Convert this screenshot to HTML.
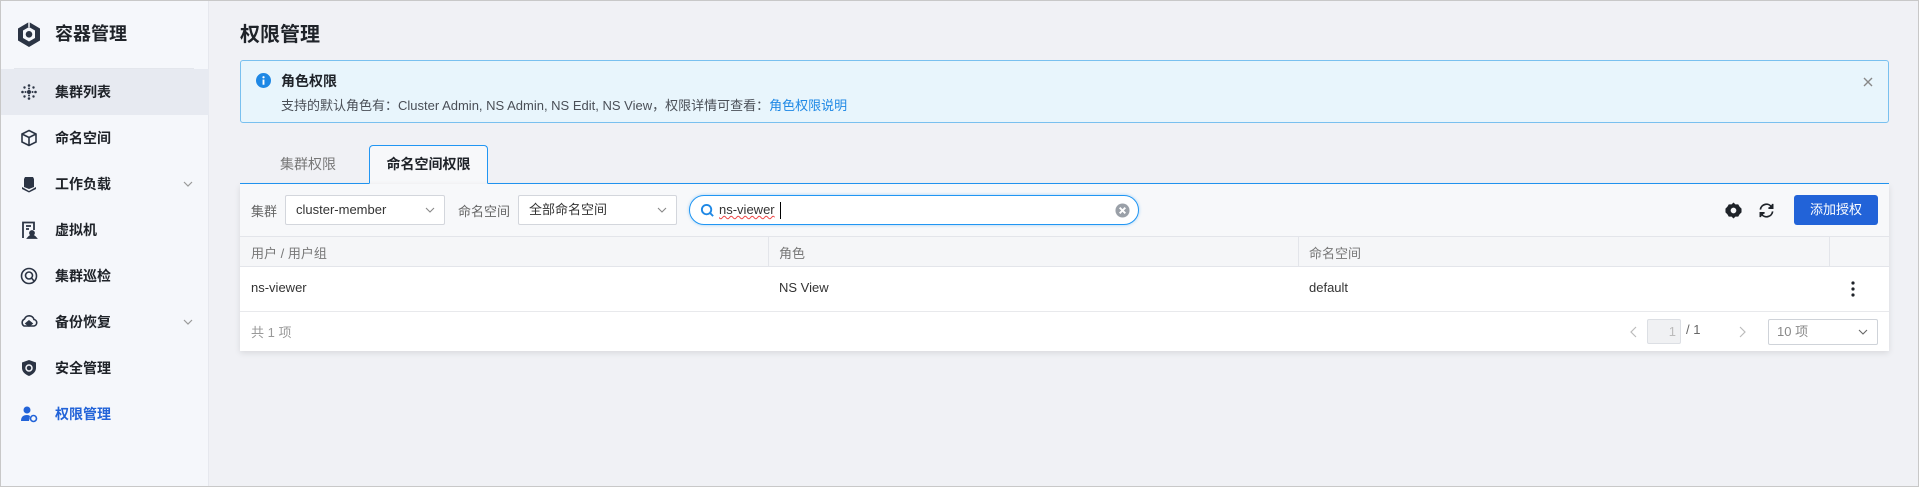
<!DOCTYPE html>
<html><head><meta charset="utf-8"><style>
*{box-sizing:border-box;margin:0;padding:0}
body{width:1919px;height:487px;overflow:hidden;background:#f0f1f5;font-family:"Liberation Sans","Noto Sans CJK SC",sans-serif;position:relative;color:#1f2329}
.frame{position:absolute;left:0;top:0;width:1919px;height:487px;border:1px solid #c8c8c8;pointer-events:none;z-index:10}
.side{position:absolute;left:0;top:0;width:209px;height:487px;background:#f5f7fb;border-right:1px solid #e6e8ee}
.logo{position:absolute;left:17px;top:21px}
.brand{position:absolute;left:55px;top:20px;font-size:18px;font-weight:bold;color:#1f2329}
.sdiv{position:absolute;left:14px;top:68px;width:180px;height:1px;background:#e3e6ec}
.item{position:absolute;left:0;width:209px;height:46px;display:flex;align-items:center;font-size:14px;font-weight:bold;color:#1f2329}
.item.act{background:#e7eaf1}
.item .ic{position:absolute;left:20px;top:14px;width:18px;height:18px}
.item .t{position:absolute;left:55px}
.item .ch{position:absolute;left:183px;top:20px}
.item.blue{color:#2263d8}
h1{position:absolute;left:240px;top:18px;font-size:20px;font-weight:bold;color:#1f2329}
.alert{position:absolute;left:240px;top:60px;width:1649px;height:63px;background:#e8f5fc;border:1px solid #79c0ef;border-radius:3px}
.alert .ti{position:absolute;left:40px;top:10px;font-size:14px;font-weight:bold}
.alert .ds{position:absolute;left:40px;top:34px;font-size:13px;color:#4a4f57}
.alert .ds a{color:#1e88e5;text-decoration:none}
.tabs{position:absolute;left:240px;top:145px;width:1649px;height:39px;border-bottom:1px solid #2196f3}
.tab1{position:absolute;left:40px;top:9px;font-size:14px;color:#777}
.tab2{position:absolute;left:129px;top:0;width:119px;height:39px;border:1px solid #2196f3;border-bottom:1px solid #f7f8fa;border-radius:4px 4px 0 0;background:#f7f8fa;font-size:14px;font-weight:bold;text-align:center;line-height:36px}
.card{position:absolute;left:240px;top:184px;width:1649px;height:167px;background:#fff;box-shadow:0 2px 6px rgba(0,0,0,.1)}
.tb{position:absolute;left:0;top:0;width:100%;height:53px;background:#f7f8fa;border-bottom:1px solid #e3e5ea}
.lbl{position:absolute;top:17px;font-size:13px;color:#666}
.sel{position:absolute;top:11px;height:30px;border:1px solid #d3d6dc;border-radius:2px;background:#fff;font-size:13px;padding-left:10px;line-height:28px;color:#333}
.sel svg{position:absolute;right:9px;top:11px}
.search{position:absolute;left:449px;top:11px;width:450px;height:30px;border:1px solid #2196f3;border-radius:15px;background:#fff;box-shadow:0 0 3px rgba(33,150,243,.4)}
.btn{position:absolute;left:1554px;top:11px;width:84px;height:30px;background:#2263d8;border-radius:3px;color:#fff;font-size:13px;text-align:center;line-height:30px}
.th{position:absolute;top:53px;left:0;width:100%;height:30px;background:#f5f6f8;border-bottom:1px solid #e3e5ea;font-size:13px;color:#777}
.th div,.tr div{position:absolute;top:6px}
.vl{position:absolute;top:0;width:1px;height:30px;background:#e3e5ea}
.tr{position:absolute;top:83px;left:0;width:100%;height:45px;border-bottom:1px solid #e8e9ec;font-size:13px;color:#333}
.tr div{top:13px}
.ft{position:absolute;top:128px;left:0;width:100%;height:39px;font-size:13px;color:#999}
</style></head><body>
<div class="side">
<svg class="logo" width="24" height="27" viewBox="0 0 24 27"><path d="M12 1 L23 7.5 V19.5 L12 26 L1 19.5 V7.5 Z" fill="#2b3444"/><path d="M12 6 L18 9.5 V17 L12 20.5 L6 17 V9.5 Z" fill="#f5f7fb"/><circle cx="12" cy="13.3" r="3.3" fill="#2b3444"/><path d="M12 1 V6" stroke="#f5f7fb" stroke-width="1.5"/></svg>
<div class="brand">容器管理</div>
<div class="sdiv"></div>
<div class="item act" style="top:69px"><svg class="ic" viewBox="0 0 18 18" fill="#2b3444"><circle cx="9" cy="9" r="2"/><circle cx="9" cy="2.5" r="1.3"/><circle cx="9" cy="15.5" r="1.3"/><circle cx="2.5" cy="9" r="1.3"/><circle cx="15.5" cy="9" r="1.3"/><circle cx="4.5" cy="4.5" r="1.2"/><circle cx="13.5" cy="4.5" r="1.2"/><circle cx="4.5" cy="13.5" r="1.2"/><circle cx="13.5" cy="13.5" r="1.2"/><circle cx="9" cy="5.5" r="1"/><circle cx="9" cy="12.5" r="1"/><circle cx="5.5" cy="9" r="1"/><circle cx="12.5" cy="9" r="1"/></svg><span class="t">集群列表</span></div>
<div class="item" style="top:115px"><svg class="ic" viewBox="0 0 18 18" fill="none" stroke="#2b3444" stroke-width="1.6"><path d="M9 1.5 L16 5 V13 L9 16.5 L2 13 V5 Z M2 5 L9 8.5 L16 5 M9 8.5 V16.5"/></svg><span class="t">命名空间</span></div>
<div class="item" style="top:161px"><svg class="ic" viewBox="0 0 18 18" fill="#2b3444"><path d="M5 2 H13 L14 4 V12 L9 14 L4 12 V4 Z"/><path d="M2 12 L9 16 L16 12 V14 L9 17.5 L2 14 Z"/></svg><span class="t">工作负载</span><svg class="ch" width="10" height="6"><path d="M1 1 L5 5 L9 1" fill="none" stroke="#999" stroke-width="1.2"/></svg></div>
<div class="item" style="top:207px"><svg class="ic" viewBox="0 0 18 18" fill="none" stroke="#2b3444" stroke-width="1.8"><path d="M3 17 V1.5 H14 V9 M6 5 H11 M6 8 H9"/><circle cx="12" cy="12" r="2" fill="#2b3444"/><path d="M8 17 Q12 12 16 17 Z" fill="#2b3444"/></svg><span class="t">虚拟机</span></div>
<div class="item" style="top:253px"><svg class="ic" viewBox="0 0 18 18" fill="none" stroke="#2b3444" stroke-width="1.6"><circle cx="9" cy="9" r="7.5"/><circle cx="9" cy="8.5" r="3.5"/><path d="M11.5 11 L14 14"/></svg><span class="t">集群巡检</span></div>
<div class="item" style="top:299px"><svg class="ic" viewBox="0 0 18 18" fill="none" stroke="#2b3444" stroke-width="1.6"><path d="M4 13 A4 4 0 0 1 4.5 6 A5 5 0 0 1 14 6.5 A3.3 3.3 0 0 1 14 13 Z"/><path d="M9 8 L6 10.5 L9 13 L12 10.5 Z" fill="#2b3444"/></svg><span class="t">备份恢复</span><svg class="ch" width="10" height="6"><path d="M1 1 L5 5 L9 1" fill="none" stroke="#999" stroke-width="1.2"/></svg></div>
<div class="item" style="top:345px"><svg class="ic" viewBox="0 0 18 18"><path d="M9 1 L16 3.5 V9 Q16 14 9 17 Q2 14 2 9 V3.5 Z" fill="#2b3444"/><circle cx="9" cy="9" r="3" fill="none" stroke="#f5f7fb" stroke-width="1.5"/></svg><span class="t">安全管理</span></div>
<div class="item blue" style="top:391px"><svg class="ic" viewBox="0 0 18 18" fill="#2263d8"><circle cx="7" cy="5" r="3.5"/><path d="M1 16 Q1 10 7 10 Q9 10 10 11 L9 16 Z"/><circle cx="13.5" cy="13.5" r="3" fill="none" stroke="#2263d8" stroke-width="1.6"/></svg><span class="t">权限管理</span></div>
</div>

<h1>权限管理</h1>
<div class="alert">
<svg style="position:absolute;left:15px;top:12px" width="15" height="15" viewBox="0 0 16 16"><circle cx="8" cy="8" r="8" fill="#1e88e5"/><rect x="7" y="7" width="2" height="5.5" fill="#fff"/><circle cx="8" cy="4.5" r="1.2" fill="#fff"/></svg>
<div class="ti">角色权限</div>
<div class="ds">支持的默认角色有：Cluster Admin, NS Admin, NS Edit, NS View，权限详情可查看：<a>角色权限说明</a></div>
<svg style="position:absolute;left:1622px;top:16px" width="10" height="10"><path d="M1 1 L9 9 M9 1 L1 9" stroke="#888" stroke-width="1.4"/></svg>
</div>
<div class="tabs"><div class="tab1">集群权限</div><div class="tab2">命名空间权限</div></div>
<div class="card">
<div class="tb">
<div class="lbl" style="left:11px">集群</div>
<div class="sel" style="left:45px;width:160px">cluster-member<svg width="10" height="6"><path d="M1 1 L5 5 L9 1" fill="none" stroke="#888" stroke-width="1.1"/></svg></div>
<div class="lbl" style="left:218px">命名空间</div>
<div class="sel" style="left:278px;width:159px">全部命名空间<svg width="10" height="6"><path d="M1 1 L5 5 L9 1" fill="none" stroke="#888" stroke-width="1.1"/></svg></div>
<div class="search"><svg style="position:absolute;left:10px;top:7px" width="15" height="15" viewBox="0 0 16 16" fill="none" stroke="#1e88e5" stroke-width="2"><circle cx="7" cy="7" r="5"/><path d="M10.5 10.5 L14 14"/></svg><span style="position:absolute;left:29px;top:6px;font-size:13px;color:#333;text-decoration:underline wavy #e44;text-decoration-thickness:1px">ns-viewer</span><span style="position:absolute;left:90px;top:6px;width:1px;height:17px;background:#000"></span><svg style="position:absolute;left:425px;top:7px" width="15" height="15" viewBox="0 0 16 16"><circle cx="8" cy="8" r="7.5" fill="#9aa0a8"/><path d="M5 5 L11 11 M11 5 L5 11" stroke="#fff" stroke-width="2"/></svg></div>
<svg style="position:absolute;left:1485px;top:18px" width="17" height="17" viewBox="0 0 18 18"><path d="M9 0.5 L11 2.5 H14 L15.5 5 L17.5 7 V11 L15.5 13 L14 15.5 H11 L9 17.5 L7 15.5 H4 L2.5 13 L0.5 11 V7 L2.5 5 L4 2.5 H7 Z" fill="#1f2329"/><circle cx="9" cy="9" r="3" fill="#f7f8fa"/></svg>
<svg style="position:absolute;left:1518px;top:18px" width="17" height="17" viewBox="0 0 18 18" fill="none" stroke="#1f2329" stroke-width="1.8"><path d="M2.5 8 A6.5 6.5 0 0 1 14.5 5.5 M15.5 10 A6.5 6.5 0 0 1 3.5 12.5"/><path d="M15.5 2 V6.5 H11" fill="#1f2329"/><path d="M2.5 16 V11.5 H7" fill="#1f2329"/></svg>
<div class="btn">添加授权</div>
</div>
<div class="th"><div style="left:11px">用户 / 用户组</div><span class="vl" style="left:528px"></span><div style="left:539px">角色</div><span class="vl" style="left:1058px"></span><div style="left:1069px">命名空间</div><span class="vl" style="left:1589px"></span></div>
<div class="tr"><div style="left:11px">ns-viewer</div><div style="left:539px">NS View</div><div style="left:1069px">default</div>
<svg style="position:absolute;left:1611px;top:14px" width="4" height="16"><circle cx="2" cy="2" r="1.6" fill="#1f2329"/><circle cx="2" cy="8" r="1.6" fill="#1f2329"/><circle cx="2" cy="14" r="1.6" fill="#1f2329"/></svg></div>
<div class="ft"><span style="position:absolute;left:11px;top:10px">共 1 项</span>
<svg style="position:absolute;left:1390px;top:14px" width="7" height="12"><path d="M6 1 L1 6 L6 11" fill="none" stroke="#bbb" stroke-width="1.2"/></svg>
<div style="position:absolute;left:1407px;top:7px;width:34px;height:25px;background:#f0f1f3;border:1px solid #dcdfe4;border-radius:2px;text-align:right;padding-right:4px;line-height:23px;color:#bbb">1</div>
<span style="position:absolute;left:1446px;top:10px;color:#666">/ 1</span>
<svg style="position:absolute;left:1499px;top:14px" width="7" height="12"><path d="M1 1 L6 6 L1 11" fill="none" stroke="#bbb" stroke-width="1.2"/></svg>
<div style="position:absolute;left:1528px;top:7px;width:110px;height:26px;border:1px solid #cfd3d9;border-radius:2px;padding-left:8px;line-height:24px;color:#888">10 项<svg style="position:absolute;right:9px;top:9px" width="10" height="6"><path d="M1 1 L5 5 L9 1" fill="none" stroke="#666" stroke-width="1.1"/></svg></div>
</div>
</div>
<div class="frame"></div>
</body></html>
